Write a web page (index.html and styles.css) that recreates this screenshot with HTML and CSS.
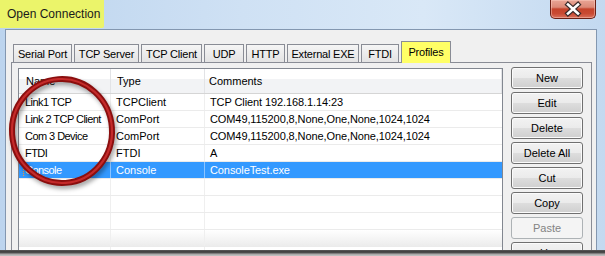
FILE: index.html
```html
<!DOCTYPE html>
<html>
<head>
<meta charset="utf-8">
<link rel="stylesheet" href="styles.css">
</head>
<body>
<div class="window">
  <div class="titlebar">
    <div class="title">Open Connection</div>
    <div class="close">
      <svg width="46" height="19" viewBox="0 0 46 19">
        <path d="M18 4.5 L28 13.5 M28 4.5 L18 13.5" stroke="#3a2a2a" stroke-width="5" stroke-linecap="square"/>
        <path d="M18 4.5 L28 13.5 M28 4.5 L18 13.5" stroke="#ffffff" stroke-width="2.6" stroke-linecap="square"/>
      </svg>
    </div>
  </div>
  <div class="client">
    <div class="tabs">
      <div class="tab">Serial Port</div>
      <div class="tab">TCP Server</div>
      <div class="tab">TCP Client</div>
      <div class="tab">UDP</div>
      <div class="tab">HTTP</div>
      <div class="tab">External EXE</div>
      <div class="tab">FTDI</div>
      <div class="tab active">Profiles</div>
    </div>
    <div class="panel">
      <div class="list">
        <div class="row head">
          <div class="cell">Name</div>
          <div class="cell">Type</div>
          <div class="cell">Comments</div>
        </div>
        <div class="row">
          <div class="cell">Link1 TCP</div>
          <div class="cell">TCPClient</div>
          <div class="cell">TCP Client 192.168.1.14:23</div>
        </div>
        <div class="row">
          <div class="cell">Link 2 TCP Client</div>
          <div class="cell">ComPort</div>
          <div class="cell">COM49,115200,8,None,One,None,1024,1024</div>
        </div>
        <div class="row">
          <div class="cell">Com 3 Device</div>
          <div class="cell">ComPort</div>
          <div class="cell">COM49,115200,8,None,One,None,1024,1024</div>
        </div>
        <div class="row">
          <div class="cell">FTDI</div>
          <div class="cell">FTDI</div>
          <div class="cell">A</div>
        </div>
        <div class="row selected">
          <div class="cell"><span class="focus">Console</span></div>
          <div class="cell">Console</div>
          <div class="cell">ConsoleTest.exe</div>
        </div>
        <div class="row"><div class="cell"></div><div class="cell"></div><div class="cell"></div></div>
        <div class="row"><div class="cell"></div><div class="cell"></div><div class="cell"></div></div>
        <div class="row"><div class="cell"></div><div class="cell"></div><div class="cell"></div></div>
        <div class="row fade"><div class="cell"></div><div class="cell"></div><div class="cell"></div></div>
        <div class="row"><div class="cell"></div><div class="cell"></div><div class="cell"></div></div>
      </div>
      <div class="buttons">
        <div class="btn">New</div>
        <div class="btn">Edit</div>
        <div class="btn">Delete</div>
        <div class="btn">Delete All</div>
        <div class="btn">Cut</div>
        <div class="btn">Copy</div>
        <div class="btn disabled">Paste</div>
        <div class="btn">Up</div>
      </div>
    </div>
  </div>
</div>
<div class="edge"></div>
<svg class="circle" width="605" height="256" viewBox="0 0 605 256">
  <g transform="rotate(-4 62 131)">
    <ellipse cx="62" cy="131" rx="50" ry="52" fill="none" stroke="#8a0e0e" stroke-width="6"/>
    <ellipse cx="62" cy="131" rx="50" ry="52" fill="none" stroke="#c42a2a" stroke-width="2.2"/>
  </g>
</svg>
</body>
</html>
```
FILE: styles.css
```css
html, body {
  margin: 0;
  padding: 0;
}
body {
  width: 605px;
  height: 256px;
  overflow: hidden;
  position: relative;
  font-family: "Liberation Sans", Arial, sans-serif;
  font-size: 11px;
  color: #000;
  background: #c8c8c8;
}
.window {
  height: 250px;
  overflow: hidden;
  display: flex;
  flex-direction: column;
  background: linear-gradient(90deg, #bcd4ee 0%, #cfe1f4 40%, #d9e8f7 70%, #c3d9f0 100%);
}
.titlebar {
  height: 29px;
  flex: 0 0 29px;
  display: flex;
  align-items: flex-start;
}
.title {
  width: 97px;
  height: 28px;
  padding-left: 7px;
  background: #ebf46a;
  font-size: 12px;
  line-height: 28px;
  color: #1a1a1a;
  border-bottom-right-radius: 2px;
}
.close {
  margin-left: auto;
  margin-right: 9px;
  width: 44px;
  height: 18px;
  border: 1px solid #6a2016;
  border-top: none;
  border-radius: 0 0 5px 5px;
  background: linear-gradient(#e9a595 0%, #dc8a78 40%, #c5432b 50%, #c94a33 75%, #d9705c 100%);
  box-shadow: inset 0 0 0 1px rgba(255, 210, 200, 0.45);
}
.close svg {
  display: block;
  margin-left: -1px;
}
.client {
  flex: 1;
  margin: 0 8px 0 5px;
  border: 1px solid #8397b0;
  border-bottom: none;
  background: #f0f0f0;
  padding: 11px 4px 0 5px;
  display: flex;
  flex-direction: column;
  min-height: 0;
}
.tabs {
  display: grid;
  grid-template-columns: 59px 65px 61px 40px 39px 72px 38px 50px;
  column-gap: 2px;
  align-items: end;
  margin-left: 2px;
  height: 21px;
}
.tab {
  height: 18px;
  box-sizing: border-box;
  border: 1px solid #898c95;
  border-bottom: none;
  background: linear-gradient(#f5f5f5, #e3e3e3);
  text-align: center;
  line-height: 18px;
  white-space: nowrap;
  overflow: hidden;
  letter-spacing: -0.2px;
}
.tab.active {
  height: 22px;
  margin-bottom: -1px;
  position: relative;
  z-index: 1;
  background: #ffff66;
  line-height: 20px;
}
.panel {
  flex: 1;
  min-height: 0;
  border: 1px solid #898c95;
  border-bottom: none;
  background: #f0f0f0;
  padding: 4px 8px 0 6px;
  display: flex;
  gap: 8px;
}
.list {
  width: 485px;
  flex: 0 0 485px;
  box-sizing: border-box;
  margin-top: 1px;
  border: 1px solid #828790;
  border-bottom: none;
  background: #fff;
  overflow: hidden;
}
.row {
  display: grid;
  grid-template-columns: 92px 94px 1fr;
  height: 17px;
  box-sizing: border-box;
  border-bottom: 1px solid #ebebeb;
  line-height: 16px;
}
.row .cell {
  border-right: 1px solid #efefef;
  padding-left: 6px;
  white-space: nowrap;
  overflow: hidden;
}
.row .cell:first-child {
  letter-spacing: -0.55px;
}
.row .cell:nth-child(2),
.row .cell:nth-child(3) {
  padding-left: 5px;
}
.row .cell:nth-child(3) {
  border-right: none;
  letter-spacing: -0.1px;
}
.row.head {
  height: 25px;
  line-height: 24px;
  border-bottom: 1px solid #d5d5d5;
  background: linear-gradient(#ffffff 0%, #ffffff 42%, #f2f3f5 42%, #f2f3f5 100%);
}
.row.head .cell {
  border-right: 1px solid #e2e3e6;
  padding-left: 7px;
  letter-spacing: 0;
}
.row.head .cell:nth-child(2) {
  padding-left: 6px;
}
.row.head .cell:nth-child(3) {
  padding-left: 4px;
}
.row.selected {
  background: #3399ff;
  color: #fff;
}
.row.selected .cell {
  border-right-color: #8cc4ff;
}
.focus {
  margin-left: -2px;
  padding-left: 1px;
  border-left: 1px dotted #ff9a33;
}
.row.fade {
  background: linear-gradient(#ffffff, #ececec);
}
.buttons {
  width: 72px;
  display: flex;
  flex-direction: column;
  gap: 3px;
}
.btn {
  height: 22px;
  flex: 0 0 22px;
  box-sizing: border-box;
  border: 1px solid #707070;
  border-radius: 3px;
  background: linear-gradient(#f2f2f2 0%, #ebebeb 48%, #dddddd 52%, #cfcfcf 100%);
  box-shadow: inset 0 0 0 1px #fbfbfb;
  text-align: center;
  line-height: 20px;
  color: #000;
}
.btn.disabled {
  border-color: #adb2b5;
  background: #f4f4f4;
  color: #838383;
  box-shadow: none;
}
.edge {
  height: 6px;
  background: linear-gradient(#5a5a5a 0px, #3c3c3c 2px, #5a5a5a 3px, #a2a2a2 4px, #c6c6c6 6px);
}
.circle {
  position: absolute;
  left: 0;
  top: 0;
  pointer-events: none;
  filter: drop-shadow(2px 3px 2px rgba(0, 0, 0, 0.35));
}
```
